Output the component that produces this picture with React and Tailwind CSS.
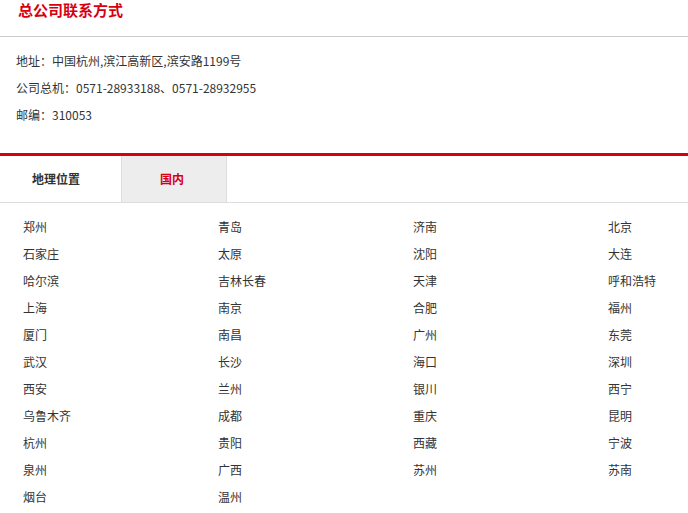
export default function App() {
  const cities = [
    "郑州", "青岛", "济南", "北京",
    "石家庄", "太原", "沈阳", "大连",
    "哈尔滨", "吉林长春", "天津", "呼和浩特",
    "上海", "南京", "合肥", "福州",
    "厦门", "南昌", "广州", "东莞",
    "武汉", "长沙", "海口", "深圳",
    "西安", "兰州", "银川", "西宁",
    "乌鲁木齐", "成都", "重庆", "昆明",
    "杭州", "贵阳", "西藏", "宁波",
    "泉州", "广西", "苏州", "苏南",
    "烟台", "温州",
  ];
  return (
    <div
      className="w-[688px] h-[513px] overflow-hidden bg-white text-[#333]"
      style={{ fontFamily: '"Noto Sans CJK SC", "Noto Sans", sans-serif' }}
    >
      <div className="h-[37px] border-b border-[#ccc] pl-[18px]">
        <h2 className="text-[15px] leading-[20px] font-bold text-[#d7000f]">总公司联系方式</h2>
      </div>
      <div className="pl-4 pt-[10px] pb-[25px] text-[12px] leading-[27px] text-[#333]">
        <p>地址：中国杭州,滨江高新区,滨安路1199号</p>
        <p>公司总机：0571-28933188、0571-28932955</p>
        <p>邮编：310053</p>
      </div>
      <div className="border-t-[3px] border-[#d7000f] border-b border-b-[#ddd] flex h-[50px]">
        <div className="w-[121px] pl-[32px] text-[12px] font-bold leading-[46px] text-[#333]">地理位置</div>
        <div className="w-[106px] pl-[38px] text-[12px] font-bold leading-[46px] text-[#d7000f] bg-[#ededed] border-x border-[#ddd]">国内</div>
      </div>
      <div className="pl-[23px] pt-[10px] grid grid-cols-[repeat(4,195px)] text-[12px] leading-[27px] text-[#333]">
        {cities.map((c) => (
          <div key={c} className="h-[27px] whitespace-nowrap">{c}</div>
        ))}
      </div>
    </div>
  );
}
